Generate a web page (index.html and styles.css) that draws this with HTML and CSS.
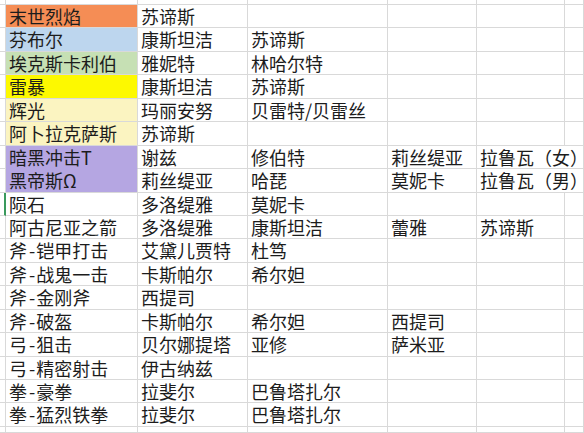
FILE: index.html
```html
<!DOCTYPE html>
<html lang="zh-CN">
<head>
<meta charset="utf-8">
<title>Sheet</title>
<link rel="stylesheet" href="styles.css">
</head>
<body>
<div class="sheet">
  <div class="stub top"></div><div class="c top"></div><div class="c top"></div><div class="c top"></div><div class="c top"></div><div class="c top"></div><div class="c top last"></div>

  <div class="stub"></div><div class="c orange">末世烈焰</div><div class="c">苏谛斯</div><div class="c"></div><div class="c"></div><div class="c"></div><div class="c last"></div>
  <div class="stub"></div><div class="c blue">芬布尔</div><div class="c">康斯坦洁</div><div class="c">苏谛斯</div><div class="c"></div><div class="c"></div><div class="c last"></div>
  <div class="stub"></div><div class="c green">埃克斯卡利伯</div><div class="c">雅妮特</div><div class="c">林哈尔特</div><div class="c"></div><div class="c"></div><div class="c last"></div>
  <div class="stub"></div><div class="c yellow">雷暴</div><div class="c">康斯坦洁</div><div class="c">苏谛斯</div><div class="c"></div><div class="c"></div><div class="c last"></div>
  <div class="stub"></div><div class="c cream">辉光</div><div class="c">玛丽安努</div><div class="c">贝雷特/贝雷丝</div><div class="c"></div><div class="c"></div><div class="c last"></div>
  <div class="stub"></div><div class="c cream">阿卜拉克萨斯</div><div class="c">苏谛斯</div><div class="c"></div><div class="c"></div><div class="c"></div><div class="c last"></div>
  <div class="stub"></div><div class="c purple joined">暗黑冲击T</div><div class="c">谢兹</div><div class="c">修伯特</div><div class="c">莉丝缇亚</div><div class="c wide">拉鲁瓦（女）</div>
  <div class="stub"></div><div class="c purple">黑帝斯Ω</div><div class="c">莉丝缇亚</div><div class="c">哈琵</div><div class="c">莫妮卡</div><div class="c wide">拉鲁瓦（男）</div>
  <div class="stub active"></div><div class="c">陨石</div><div class="c">多洛缇雅</div><div class="c">莫妮卡</div><div class="c"></div><div class="c"></div><div class="c last"></div>
  <div class="stub"></div><div class="c">阿古尼亚之箭</div><div class="c">多洛缇雅</div><div class="c">康斯坦洁</div><div class="c">蕾雅</div><div class="c">苏谛斯</div><div class="c last"></div>
  <div class="stub"></div><div class="c">斧<span class="dash">-</span>铠甲打击</div><div class="c">艾黛儿贾特</div><div class="c">杜笃</div><div class="c"></div><div class="c"></div><div class="c last"></div>
  <div class="stub"></div><div class="c">斧<span class="dash">-</span>战鬼一击</div><div class="c">卡斯帕尔</div><div class="c">希尔妲</div><div class="c"></div><div class="c"></div><div class="c last"></div>
  <div class="stub"></div><div class="c">斧<span class="dash">-</span>金刚斧</div><div class="c">西提司</div><div class="c"></div><div class="c"></div><div class="c"></div><div class="c last"></div>
  <div class="stub"></div><div class="c">斧<span class="dash">-</span>破盔</div><div class="c">卡斯帕尔</div><div class="c">希尔妲</div><div class="c">西提司</div><div class="c"></div><div class="c last"></div>
  <div class="stub"></div><div class="c">弓<span class="dash">-</span>狙击</div><div class="c">贝尔娜提塔</div><div class="c">亚修</div><div class="c">萨米亚</div><div class="c"></div><div class="c last"></div>
  <div class="stub"></div><div class="c">弓<span class="dash">-</span>精密射击</div><div class="c">伊古纳兹</div><div class="c"></div><div class="c"></div><div class="c"></div><div class="c last"></div>
  <div class="stub"></div><div class="c">拳<span class="dash">-</span>豪拳</div><div class="c">拉斐尔</div><div class="c">巴鲁塔扎尔</div><div class="c"></div><div class="c"></div><div class="c last"></div>
  <div class="stub"></div><div class="c">拳<span class="dash">-</span>猛烈铁拳</div><div class="c">拉斐尔</div><div class="c">巴鲁塔扎尔</div><div class="c"></div><div class="c"></div><div class="c last"></div>
  <div class="stub"></div><div class="c"></div><div class="c"></div><div class="c"></div><div class="c"></div><div class="c"></div><div class="c last"></div>
</div>
</body>
</html>
```

FILE: styles.css
```css
html, body {
  margin: 0;
  padding: 0;
  background: #ffffff;
}

body {
  width: 584px;
  height: 433px;
  overflow: hidden;
  font-family: "Noto Sans CJK SC", "Noto Sans", sans-serif;
  font-size: 18px;
  color: #1c1c1c;
}

.sheet {
  display: grid;
  grid-template-columns: 6px 132px 110px 140px 89px 88px 19px;
  grid-template-rows: 5px repeat(18, 23.44px) 6px;
  width: 584px;
}

.stub,
.c {
  box-sizing: border-box;
  border-right: 1px solid #d9d9d9;
  border-bottom: 1px solid #d9d9d9;
}

.stub.active {
  border-right: 2px solid #3a9a5c;
}

.c {
  display: block;
  padding: 1px 0 0 3px;
  white-space: nowrap;
  line-height: 21px;
  overflow: visible;
}

.c.top,
.c.last {
  line-height: 0;
  padding: 0;
}

.c.wide {
  grid-column: span 2;
}

.dash {
  padding: 0 1px 0 2px;
}

.orange { background: #f58d55; }
.blue { background: #bdd6ee; }
.green { background: #c6e0b4; }
.yellow { background: #fdf900; }
.cream { background: #fbf4c1; }
.purple { background: #b5a6e2; }

.purple.joined {
  border-bottom-color: #b5a6e2;
}
```
